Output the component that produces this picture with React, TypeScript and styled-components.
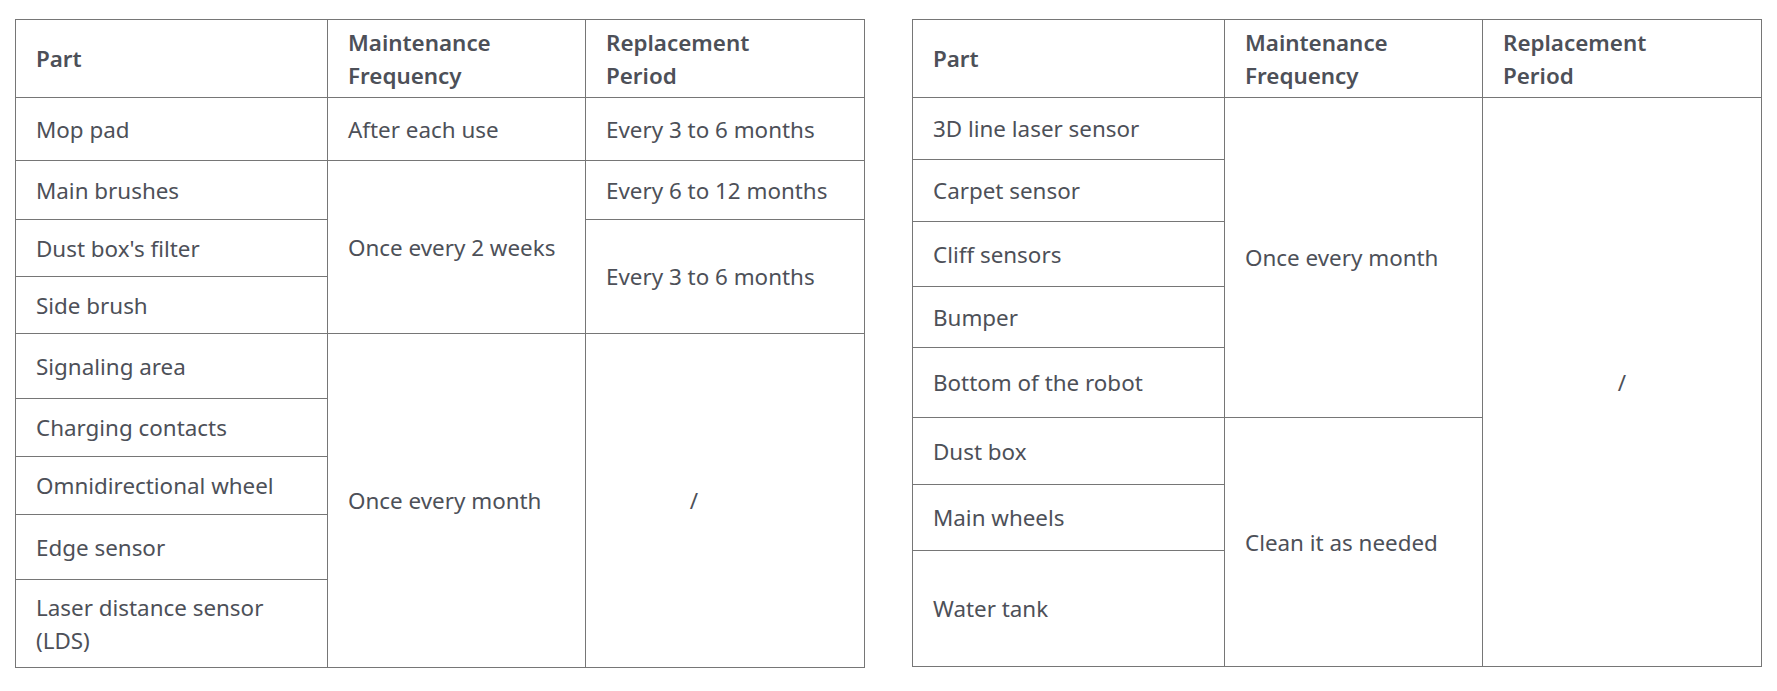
import React from "react";
import styled, { createGlobalStyle } from "styled-components";

const Global = createGlobalStyle`
  html, body { margin: 0; padding: 0; background: #ffffff; }
  body { font-family: "Noto Sans", "Open Sans", sans-serif; }
`;

const Page = styled.div`
  display: flex;
  align-items: flex-start;
  gap: 47px;
  padding: 19px 0 0 15px;
`;

const Table = styled.table`
  width: 849px;
  table-layout: fixed;
  border-collapse: collapse;
  color: #4d5058;
  font-size: 22.4px;
  line-height: 33px;
`;

const Row = styled.tr<{ $h: number }>`
  height: ${(p) => p.$h}px;
`;

const Head = styled.th`
  border: 1px solid #767676;
  padding: 5px 20px;
  text-align: left;
  font-weight: 600;
  vertical-align: middle;
`;

const Cell = styled.td<{ $center?: boolean; $padRight?: number }>`
  border: 1px solid #767676;
  padding: 0 ${(p) => (p.$padRight ?? 20)}px 0 20px;
  text-align: ${(p) => (p.$center ? "center" : "left")};
  vertical-align: middle;
  font-weight: 400;
`;

const Header = () => (
  <thead>
    <Row $h={78}>
      <Head>Part</Head>
      <Head>
        Maintenance
        <br />
        Frequency
      </Head>
      <Head>
        Replacement
        <br />
        Period
      </Head>
    </Row>
  </thead>
);

const Cols = () => (
  <colgroup>
    <col style={{ width: 312 }} />
    <col style={{ width: 258 }} />
    <col style={{ width: 279 }} />
  </colgroup>
);

export default function App() {
  return (
    <>
      <Global />
      <Page>
        <Table>
          <Cols />
          <Header />
          <tbody>
            <Row $h={63}>
              <Cell>Mop pad</Cell>
              <Cell>After each use</Cell>
              <Cell>Every 3 to 6 months</Cell>
            </Row>
            <Row $h={59}>
              <Cell>Main brushes</Cell>
              <Cell rowSpan={3}>Once every 2 weeks</Cell>
              <Cell>Every 6 to 12 months</Cell>
            </Row>
            <Row $h={57}>
              <Cell>Dust box's filter</Cell>
              <Cell rowSpan={2}>Every 3 to 6 months</Cell>
            </Row>
            <Row $h={57}>
              <Cell>Side brush</Cell>
            </Row>
            <Row $h={65}>
              <Cell>Signaling area</Cell>
              <Cell rowSpan={5}>Once every month</Cell>
              <Cell rowSpan={5} $center $padRight={82}>
                /
              </Cell>
            </Row>
            <Row $h={58}>
              <Cell>Charging contacts</Cell>
            </Row>
            <Row $h={58}>
              <Cell>Omnidirectional wheel</Cell>
            </Row>
            <Row $h={65}>
              <Cell>Edge sensor</Cell>
            </Row>
            <Row $h={88}>
              <Cell>
                Laser distance sensor
                <br />
                (LDS)
              </Cell>
            </Row>
          </tbody>
        </Table>

        <Table>
          <Cols />
          <Header />
          <tbody>
            <Row $h={62}>
              <Cell>3D line laser sensor</Cell>
              <Cell rowSpan={5}>Once every month</Cell>
              <Cell rowSpan={8} $center>
                /
              </Cell>
            </Row>
            <Row $h={62}>
              <Cell>Carpet sensor</Cell>
            </Row>
            <Row $h={65}>
              <Cell>Cliff sensors</Cell>
            </Row>
            <Row $h={61}>
              <Cell>Bumper</Cell>
            </Row>
            <Row $h={70}>
              <Cell>Bottom of the robot</Cell>
            </Row>
            <Row $h={67}>
              <Cell>Dust box</Cell>
              <Cell rowSpan={3}>Clean it as needed</Cell>
            </Row>
            <Row $h={66}>
              <Cell>Main wheels</Cell>
            </Row>
            <Row $h={116}>
              <Cell>Water tank</Cell>
            </Row>
          </tbody>
        </Table>
      </Page>
    </>
  );
}
